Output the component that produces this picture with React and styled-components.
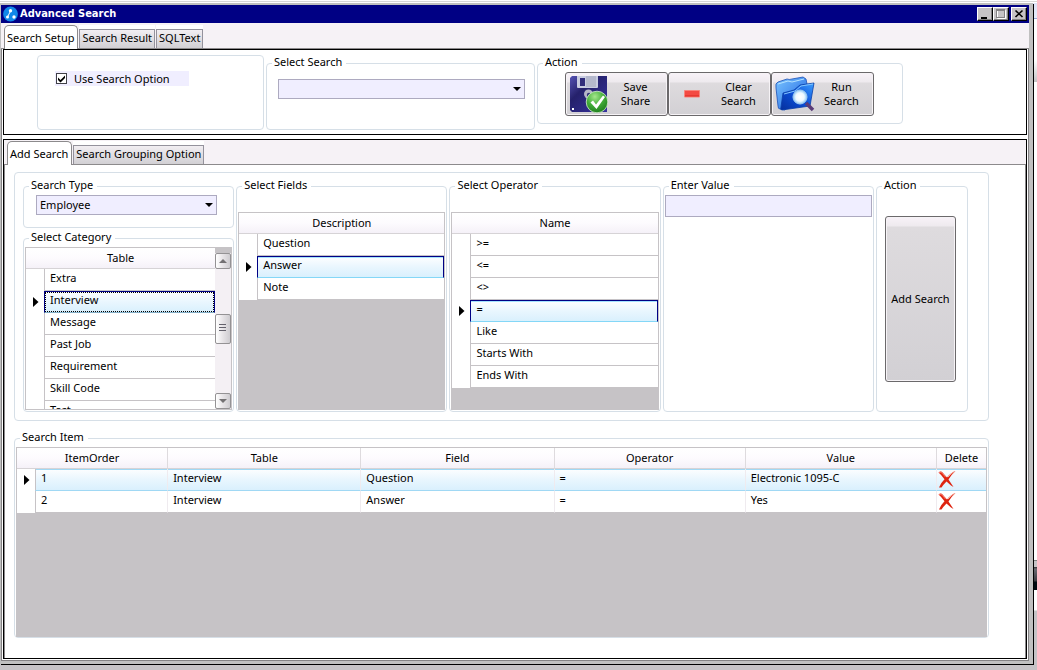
import React, { useState } from "react";
import styled, { createGlobalStyle, css } from "styled-components";

const line = "#d6dfe7";
const grid = "#c6c3c6";
const field = "#f0eeff";

const GlobalStyle = createGlobalStyle`
  * { box-sizing: border-box; }
  body {
    margin: 0;
    color: #000;
    font: 11px/16px "Noto Sans", "Open Sans", sans-serif;
    background: linear-gradient(
      #fff 1px, #d8d8d8 1px 2px, #fff 2px 3px, #dde3f8 3px, #e8edfb 18px,
      #9caede 18px 19px, #fff 19px 60px, #c6c3c6 82px, #fff 82px 560px,
      #808080 560px 561px, #c6c3c6 561px 567px, #303030 567px, #6b6b73 569px,
      #39393f 581px, #000a10 582px 590px, #fff 590px 610px, #c6c3c6 611px
    );
  }
  button, input, select { font: inherit; color: inherit; margin: 0; }
`;

const Desktop = styled.div`
  min-height: 100vh;
  display: flex;
  padding: 3px 4px 6px 0;
`;

const Window = styled.main`
  flex: 1;
  min-width: 0;
  display: flex;
  flex-direction: column;
  background: #fff;
  border: solid #c0c0c0;
  border-width: 2px 4px 3px 1px;
  box-shadow: 1px 1px 0 #000;
`;

const TitleBar = styled.header`
  display: flex;
  align-items: center;
  height: 18px;
  padding: 0 2px;
  gap: 2px;
  background: #000084;
  color: #fff;
`;

const Title = styled.h1`
  flex: 1;
  margin: 0;
  font: bold 11px/16px "DejaVu Sans Condensed", "DejaVu Sans", sans-serif;
`;

const WindowButtons = styled.div`
  display: flex;
`;

const WindowButton = styled.button`
  width: 16px;
  height: 14px;
  padding: 0;
  display: flex;
  background: ${grid};
  border: solid;
  border-width: 1px;
  border-color: #fff #000 #000 #fff;
  box-shadow: inset -1px -1px 0 #848284;
  & + &:last-child { margin-left: 2px; }
`;

const TabStrip = styled.div`
  display: flex;
  align-items: flex-end;
  height: ${(p) => p.$height}px;
  padding-left: 3px;
  background: #f6f2f6;
  border-bottom: 1px solid #8c8a8c;
`;

const Tab = styled.button`
  height: 19px;
  margin-left: 1px;
  padding: 0 2px 2px;
  white-space: nowrap;
  line-height: 16px;
  border: 1px solid #94929c;
  border-bottom: 0;
  background: linear-gradient(#f2eef2, #e4e2e6 40%, #d2d0d4);
  box-shadow: 0 -4px 0 #fff;
  ${(p) => p.$active && css`
    height: 24px;
    padding: 0 3px 0 2px;
    margin: 0 0 -1px;
    border-color: #8c8a8c;
    border-radius: 5px 5px 0 0;
    background: #fff;
    box-shadow: none;
  `}
`;

const WindowBody = styled.div`
  flex: 1;
  display: flex;
  flex-direction: column;
  gap: 4px;
  padding: 0 1px 1px;
  border: solid #848284;
  border-width: 0 1px 1px;
`;

const Panel = styled.section`
  display: flex;
  flex-direction: column;
  border: 1px solid #000;
  flex: ${(p) => (p.$grow ? "1" : "none")};
`;

const SetupRow = styled.div`
  display: grid;
  grid-template-columns: 227fr 269fr 366fr;
  align-items: start;
  gap: 2px;
  padding: 5px 123px 4px 33px;
`;

const GroupFrame = styled.fieldset`
  min-width: 0;
  min-height: ${(p) => p.$minHeight || 0}px;
  margin: 0;
  padding: 0;
  border: 1px solid ${line};
  border-radius: 4px;
  display: flex;
  flex-direction: column;
  flex: ${(p) => (p.$grow ? "1" : "none")};
`;

const GroupTitle = styled.legend`
  margin-left: 5px;
  padding: 0 4px 2px 2px;
  line-height: 14px;
`;

const GroupBody = styled.div`
  flex: 1;
  display: flex;
  flex-direction: column;
  padding: ${(p) => p.$pad};
`;

const OptionLabel = styled.label`
  display: flex;
  align-items: center;
  width: 134px;
  height: 15px;
  padding-left: 1px;
  gap: 7px;
  line-height: 15px;
  background: ${field};
`;

const TickBox = styled.span`
  display: grid;
  width: 11px;
  height: 11px;
  & > * { grid-area: 1 / 1; }
  svg { visibility: hidden; pointer-events: none; }
  input:checked + svg { visibility: visible; }
`;

const TickInput = styled.input`
  appearance: none;
  width: 11px;
  height: 11px;
  border: 1px solid #404048;
  background: #fff;
`;

const SelectBox = styled.div`
  position: relative;
  display: flex;
  &::after {
    content: "";
    position: absolute;
    right: 4px;
    top: 8px;
    border: solid transparent;
    border-width: 4px 4px 0;
    border-top-color: #000;
    pointer-events: none;
  }
`;

const Select = styled.select`
  appearance: none;
  width: 100%;
  height: 20px;
  padding: 0 16px 0 3px;
  border: 1px solid #adaac0;
  border-radius: 0;
  background: ${field};
`;

const ValueInput = styled.input`
  width: 100%;
  height: 22px;
  padding: 0 4px;
  border: 1px solid #adaac0;
  background: ${field};
`;

const ButtonRow = styled.div`
  display: grid;
  grid-template-columns: repeat(3, 1fr);
`;

const PushButton = styled.button`
  display: grid;
  grid-template-columns: ${(p) => (p.$icon ? "40px 1fr" : "1fr")};
  place-items: center;
  min-height: ${(p) => p.$height}px;
  padding: ${(p) => (p.$icon ? "0 5px 0 3px" : "0 2px")};
  line-height: 14px;
  border: 1px solid #6b696b;
  border-radius: 3px;
  background: linear-gradient(#f8f2f8, #eeeaee 9px, #dedbde 10px, #d2d0d4);
  box-shadow: inset 0 0 0 1px #f6f3f6;
`;

const SearchBuilder = styled.div`
  display: grid;
  grid-template-columns: 211fr 211fr 211fr 211fr 92fr;
  gap: 2px;
`;

const Stack = styled.div`
  display: flex;
  flex-direction: column;
  gap: 2px;
`;

const Workspace = styled.div`
  flex: 1;
  display: flex;
  flex-direction: column;
  gap: 9px;
  padding: 7px 36px 20px 9px;
  border-right: 1px solid #8c8a8c;
  border-left: 1px solid #8c8a8c;
`;

const GridFrame = styled.div`
  display: flex;
  overflow: hidden;
  border: 1px solid ${grid};
  background: ${grid};
  flex: ${(p) => (p.$height ? "none" : "1")};
  ${(p) => p.$height && `height: ${p.$height}px;`}
`;

const DataTable = styled.table`
  flex: 1;
  width: 100%;
  align-self: flex-start;
  table-layout: fixed;
  border-spacing: 0;
  border-collapse: separate;
`;

const HeadCell = styled.th`
  height: 21px;
  padding: 0;
  font-weight: normal;
  background: linear-gradient(#fff, #fdfbfe 50%, #f5f1f8);
  border-bottom: 1px solid #d6d3d6;
  & + & { border-left: 1px solid #dedbde; }
`;

const MarkerCell = styled.td`
  height: 22px;
  padding: 0 0 0 7px;
  background: #fff;
  line-height: 0;
`;

const Cell = styled.td`
  height: 22px;
  padding: 0 5px 4px;
  background: #fff;
  border-bottom: 1px solid ${grid};
  border-left: 1px solid ${(p) => (p.$inner ? "#efebef" : grid)};
  white-space: nowrap;
  ${(p) => p.$state && css`
    background: linear-gradient(#fdfeff, #e9f6fe 50%, #d9f0fd);
    border-bottom-color: #a0d8f4;
    box-shadow: inset 0 1px 0 #a0d8f4;
  `}
  ${(p) => p.$state === "current" && css`
    border: 1px solid #000084;
    border-bottom-color: #84d7f7;
    box-shadow: inset 0 1px 0 #a5e3ff;
  `}
  ${(p) => p.$state === "focus" && css`
    border: 1px solid #000084;
    border-bottom-color: #84b0c8;
    outline: 1px dotted #000;
    outline-offset: -2px;
    box-shadow: none;
  `}
`;

const DeleteButton = styled.button`
  display: block;
  height: 20px;
  padding: 0;
  border: 0;
  background: none;
`;

const DeleteCell = styled(Cell)`
  padding: 0;
`;

const ScrollBar = styled.div`
  width: 16px;
  flex: none;
  display: flex;
  flex-direction: column;
  padding-top: 5px;
  background: linear-gradient(${grid} 5px, #f4f0f4 5px);
`;

const ScrollButton = styled.button`
  height: ${(p) => p.$size}px;
  padding: 0;
  display: grid;
  place-items: center;
  border: 1px solid #949294;
  border-radius: 2px;
  background: linear-gradient(90deg, #fff, #e6e3e6 50%, #ceccd0);
`;

const ScrollGap = styled.div`
  flex: ${(p) => p.$share};
`;

const AddArea = styled.div`
  padding: 22px 11px 0 8px;
  display: grid;
`;

const Marker = () => (
  <svg width="6" height="10" viewBox="0 0 6 10" aria-hidden="true">
    <path d="M0 0 5.5 5 0 10Z" fill="#000" />
  </svg>
);

const AppIcon = () => (
  <svg width="15" height="16" viewBox="0 0 15 16" aria-hidden="true">
    <circle cx="7.5" cy="8" r="7.4" fill="#1088e8" />
    <path d="M7.500 5 4.800 10.500" stroke="#fff" />
    <circle cx="7.500" cy="4.800" r="1.700" fill="#fff" />
    <circle cx="4.500" cy="11" r="1.500" fill="#fff" />
    <circle cx="11" cy="11" r="1.700" fill="#fff" />
  </svg>
);

const SaveIcon = () => (
  <svg width="40" height="38" viewBox="0 0 40 38" aria-hidden="true">
    <defs>
      <linearGradient id="disk" x1="0" y1="0" x2="1" y2="1">
        <stop offset="0" stopColor="#5654b4" />
        <stop offset=".35" stopColor="#25216b" />
        <stop offset="1" stopColor="#3733a0" />
      </linearGradient>
      <radialGradient id="ok" cx=".4" cy=".25" r=".8">
        <stop offset="0" stopColor="#a5e78c" />
        <stop offset=".5" stopColor="#42ad39" />
        <stop offset="1" stopColor="#1c7a1c" />
      </radialGradient>
    </defs>
    <path d="M3 1H38V37H3L1 35V3Z" fill="url(#disk)" />
    <path d="M8 1H29V12Q29 13 28 13H9Q8 13 8 12Z" fill="#c8cce0" />
    <path d="M17 1H27V12H17Z" fill="#b4b8cc" />
    <path d="M11 3H16V11H11Z" fill="#312d7b" />
    <circle cx="19.500" cy="19" r="4.500" fill="#b5b6c6" />
    <circle cx="20" cy="20" r="2.200" fill="#31317b" />
    <path d="M3 33H5V35H3Z" fill="#fff" />
    <circle cx="28" cy="27" r="10.800" fill="url(#ok)" stroke="#d8efd2" strokeWidth=".8" />
    <path d="m21.500 27.500 2.500-2 3 4 7-9 2 1.500-8.500 12Z" fill="#fff" />
  </svg>
);

const ClearIcon = () => (
  <svg width="16" height="8" viewBox="0 0 16 8" aria-hidden="true">
    <path d="M.5.500H15.500V7H.5Z" fill="#f44a42" stroke="#f8857c" />
    <path d="M1 5H15V6.500H1Z" fill="#e73931" />
  </svg>
);

const RunIcon = () => (
  <svg width="40" height="36" viewBox="0 0 40 36" aria-hidden="true">
    <defs>
      <linearGradient id="back" x1="0" y1="0" x2="1" y2="1">
        <stop offset="0" stopColor="#7bc6ff" />
        <stop offset="1" stopColor="#1a5ee0" />
      </linearGradient>
      <linearGradient id="front" x1="1" y1="0" x2="0" y2="1">
        <stop offset="0" stopColor="#3ea0ff" />
        <stop offset=".5" stopColor="#0b4fd8" />
        <stop offset="1" stopColor="#062f9c" />
      </linearGradient>
      <radialGradient id="lens">
        <stop offset="0" stopColor="#fff" />
        <stop offset=".6" stopColor="#eef8ff" />
        <stop offset="1" stopColor="#8cc8f7" />
      </radialGradient>
    </defs>
    <path d="M1 12Q0 7 3 6L12 3Q14 4 17 3L28 1 31 3 32 8 10 34 5 33Q3 33 3 30Z" fill="url(#back)" stroke="#1a51b8" strokeWidth=".8" />
    <path d="M3 8 13 5 17 6 29 3" fill="none" stroke="#b5e3ff" />
    <path d="M8 17 19 14 25 9 39 7 35 30 7 34Q5 34 6 31Z" fill="url(#front)" stroke="#0a3fa8" strokeWidth=".8" />
    <path d="M9 18 20 15 26 10 38 8" fill="none" stroke="#84c6ff" />
    <path d="M31 27 38 34" stroke="#5a3c78" strokeWidth="3.500" />
    <circle cx="25" cy="21" r="7" fill="url(#lens)" stroke="#a5cdf0" />
  </svg>
);

const DeleteIcon = () => (
  <svg width="19" height="18" viewBox="0 0 19 18" aria-hidden="true">
    <path d="M1.500 2.500Q4 .5 6 3L10 7.500Q13 3 18.500 1 14 5 11.500 9.500L16.500 17 14 15.500 9.500 11.500Q6 15 4.500 17.500L2 17.500Q4 12.500 7.500 9.200Q4.500 5 1.500 2.500Z" fill="#de2410" />
    <path d="M2 2.500Q4 1.500 5.500 3.500L8.500 7" fill="none" stroke="#ff7b6b" />
    <path d="M11 7Q14 3.500 17.500 1.500" fill="none" stroke="#f7a494" />
  </svg>
);

const Arrow = ({ down }) => (
  <svg width="8" height="4" viewBox="0 0 8 4" aria-hidden="true">
    <path d={down ? "M0 0H8L4 4Z" : "M0 4H8L4 0Z"} fill="#737173" />
  </svg>
);

function Group({ title, pad = "0", minHeight, grow, children }) {
  return (
    <GroupFrame $minHeight={minHeight} $grow={grow}>
      {title && <GroupTitle>{title}</GroupTitle>}
      <GroupBody $pad={pad}>{children}</GroupBody>
    </GroupFrame>
  );
}

function List({ heading, rows, selected, state, height, children }) {
  return (
    <GridFrame $height={height}>
      <DataTable>
        <colgroup>
          <col width="18" />
          <col />
        </colgroup>
        <thead>
          <tr><HeadCell colSpan={2}>{heading}</HeadCell></tr>
        </thead>
        <tbody>
          {rows.map((row) => (
            <tr key={row}>
              <MarkerCell>{row === selected && <Marker />}</MarkerCell>
              <Cell $state={row === selected ? state : undefined}>{row}</Cell>
            </tr>
          ))}
        </tbody>
      </DataTable>
      {children}
    </GridFrame>
  );
}

const categories = ["Extra", "Interview", "Message", "Past Job", "Requirement", "Skill Code", "Test"];
const operators = [">=", "<=", "<>", "=", "Like", "Starts With", "Ends With"];
const itemColumns = [18, 132, 193, 193, 191, 191, 50];
const items = [
  ["1", "Interview", "Question", "=", "Electronic 1095-C"],
  ["2", "Interview", "Answer", "=", "Yes"],
];

export default function App() {
  const [useOption, setUseOption] = useState(true);
  return (
    <>
      <GlobalStyle />
      <Desktop>
        <Window>
          <TitleBar>
            <AppIcon />
            <Title>Advanced Search</Title>
            <WindowButtons>
              <WindowButton aria-label="Minimize">
                <svg width="14" height="12" viewBox="0 0 14 12"><path d="M3 9H9V11H3Z" /></svg>
              </WindowButton>
              <WindowButton aria-label="Maximize">
                <svg width="14" height="12" viewBox="0 0 14 12">
                  <path d="M3.500 2.500H11.500V10.500H3.500Z" fill="none" stroke="#fff" />
                  <path d="M2 1H11V10H2ZM3 3V9H10V3Z" fill="#848284" fillRule="evenodd" />
                </svg>
              </WindowButton>
              <WindowButton aria-label="Close">
                <svg width="14" height="12" viewBox="0 0 14 12"><path d="m3.500 2.500 7 6.500m0-6.500-7 6.500" stroke="#000" strokeWidth="1.600" /></svg>
              </WindowButton>
            </WindowButtons>
          </TitleBar>
          <TabStrip $height={26} role="tablist">
            <Tab $active role="tab" aria-selected="true">Search Setup</Tab>
            <Tab role="tab" aria-selected="false">Search Result</Tab>
            <Tab role="tab" aria-selected="false">SQLText</Tab>
          </TabStrip>
          <WindowBody>
            <Panel>
              <SetupRow>
                <Group minHeight={75} pad="15px 0 0 17px">
                  <OptionLabel>
                    <TickBox>
                      <TickInput type="checkbox" checked={useOption} onChange={(e) => setUseOption(e.target.checked)} />
                      <svg width="11" height="11" viewBox="0 0 11 11"><path d="M2 4.500 4.500 7 9 2.500V5L4.500 9.500 2 7Z" /></svg>
                    </TickBox>
                    Use Search Option
                  </OptionLabel>
                </Group>
                <Group title="Select Search" minHeight={75} pad="8px 9px 0 11px">
                  <SelectBox>
                    <Select aria-label="Select Search"><option></option></Select>
                  </SelectBox>
                </Group>
                <Group title="Action" minHeight={69} pad="1px 28px 0 27px">
                  <ButtonRow>
                    <PushButton $icon $height={44}><SaveIcon /><span>Save<br />Share</span></PushButton>
                    <PushButton $icon $height={44}><ClearIcon /><span>Clear<br />Search</span></PushButton>
                    <PushButton $icon $height={44}><RunIcon /><span>Run<br />Search</span></PushButton>
                  </ButtonRow>
                </Group>
              </SetupRow>
            </Panel>
            <Panel $grow>
              <TabStrip $height={25} role="tablist">
                <Tab $active role="tab" aria-selected="true">Add Search</Tab>
                <Tab role="tab" aria-selected="false">Search Grouping Option</Tab>
              </TabStrip>
              <Workspace>
                <Group pad="5px 20px 8px 8px">
                  <SearchBuilder>
                    <Stack>
                      <Group title="Search Type" pad="1px 16px 12px 12px">
                        <SelectBox>
                          <Select aria-label="Search Type"><option>Employee</option></Select>
                        </SelectBox>
                      </Group>
                      <Group title="Select Category" pad="1px">
                        <List heading="Table" rows={categories} selected="Interview" state="focus" height={163}>
                          <ScrollBar>
                            <ScrollButton $size={16} aria-label="Scroll up"><Arrow /></ScrollButton>
                            <ScrollGap $share={45} />
                            <ScrollButton $size={30} aria-label="Scroll position">
                              <svg width="8" height="9" viewBox="0 0 8 9"><path d="M0 .5H7M0 3.500H7M0 6.500H7" stroke="#63616b" /></svg>
                            </ScrollButton>
                            <ScrollGap $share={50} />
                            <ScrollButton $size={16} aria-label="Scroll down"><Arrow down /></ScrollButton>
                          </ScrollBar>
                        </List>
                      </Group>
                    </Stack>
                    <Group title="Select Fields" pad="18px 1px 1px">
                      <List heading="Description" rows={["Question", "Answer", "Note"]} selected="Answer" state="current" />
                    </Group>
                    <Group title="Select Operator" pad="18px 1px 1px">
                      <List heading="Name" rows={operators} selected="=" state="current" />
                    </Group>
                    <Group title="Enter Value" pad="1px 1px 0">
                      <ValueInput aria-label="Enter Value" />
                    </Group>
                    <Group title="Action">
                      <AddArea>
                        <PushButton $height={166}>Add Search</PushButton>
                      </AddArea>
                    </Group>
                  </SearchBuilder>
                </Group>
                <Group title="Search Item" grow pad="1px 1px 0">
                  <GridFrame>
                    <DataTable>
                      <colgroup>
                        {itemColumns.map((width, i) => <col key={i} width={width} />)}
                      </colgroup>
                      <thead>
                        <tr>
                          <HeadCell colSpan={2}>ItemOrder</HeadCell>
                          {["Table", "Field", "Operator", "Value", "Delete"].map((h) => <HeadCell key={h}>{h}</HeadCell>)}
                        </tr>
                      </thead>
                      <tbody>
                        {items.map((item, r) => (
                          <tr key={item[0]}>
                            <MarkerCell>{r === 0 && <Marker />}</MarkerCell>
                            {item.map((text, c) => (
                              <Cell key={c} $inner={c > 0} $state={r === 0 ? "row" : undefined}>{text}</Cell>
                            ))}
                            <DeleteCell $inner $state={r === 0 ? "row" : undefined}>
                              <DeleteButton aria-label={`Delete item ${item[0]}`}><DeleteIcon /></DeleteButton>
                            </DeleteCell>
                          </tr>
                        ))}
                      </tbody>
                    </DataTable>
                  </GridFrame>
                </Group>
              </Workspace>
            </Panel>
          </WindowBody>
        </Window>
      </Desktop>
    </>
  );
}
